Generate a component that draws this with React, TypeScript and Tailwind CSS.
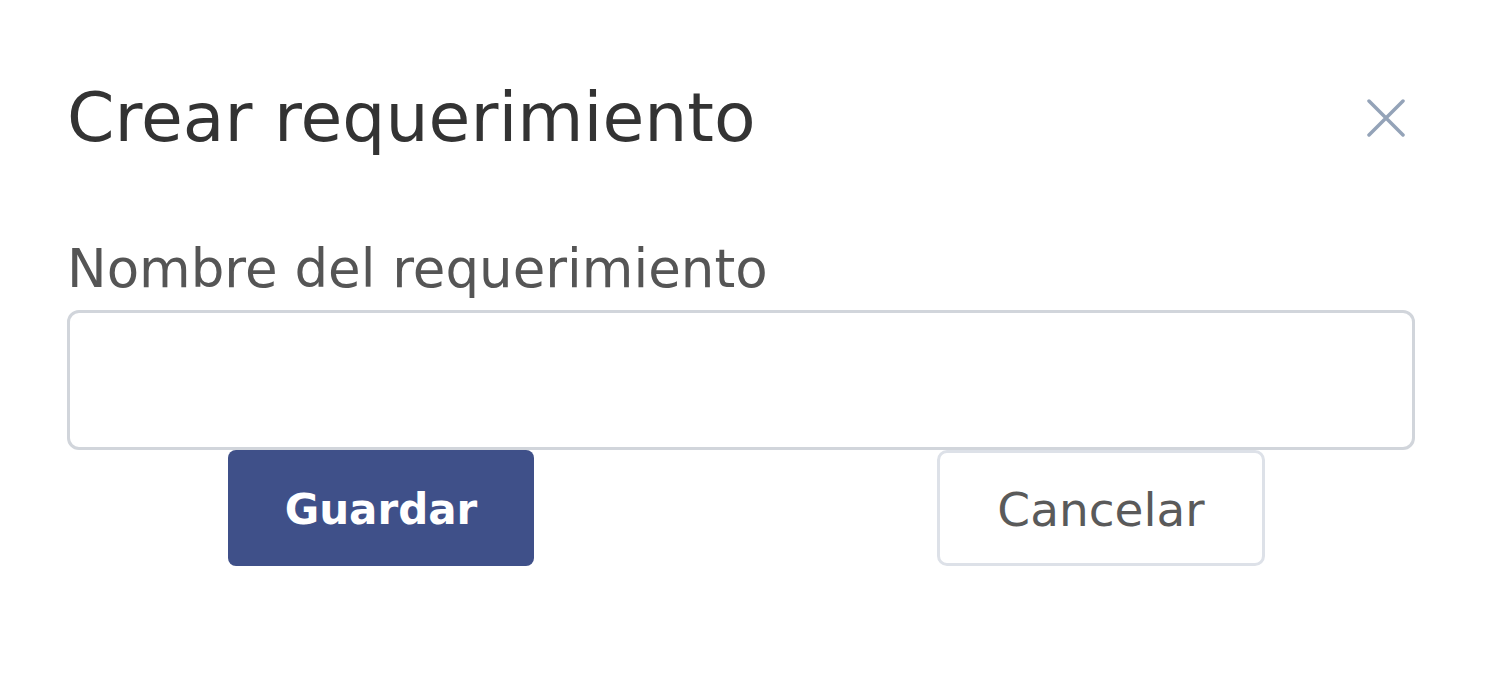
export default function App() {
  return (
    <div className="min-h-screen w-full bg-white" style={{ fontFamily: '"DejaVu Sans", "Noto Sans", sans-serif' }}>
      <div className="pl-[67px] pr-[73px] pt-[76px]">
        {/* Header */}
        <div className="flex items-center justify-between">
          <h2 className="text-[68px] font-normal leading-[84px] text-[#333333]">Crear requerimiento</h2>
          <button className="mr-[10px] text-[#94a3b8]" aria-label="Cerrar">
            <svg width="38" height="38" viewBox="0 0 38 38" fill="none" stroke="currentColor" strokeWidth="3.5" strokeLinecap="round">
              <path d="M2 2 L36 36 M36 2 L2 36" />
            </svg>
          </button>
        </div>

        {/* Form */}
        <div className="mt-[78px]">
          <label className="block text-[53px] font-medium leading-[62px] text-[#555555]">Nombre del requerimiento</label>
          <input
            type="text"
            className="mt-[10px] block h-[140px] w-full rounded-[12px] border-[3px] border-[#d1d5db] bg-white px-4 outline-none"
          />
          <div className="grid grid-cols-2 justify-items-center gap-x-[92px]">
            <button className="h-[116px] w-[306px] rounded-[8px] bg-[#3f5089] pt-[2px] text-[42px] font-semibold text-white">
              Guardar
            </button>
            <button className="h-[116px] w-[328px] rounded-[10px] border-[3px] border-[#dde1e8] bg-white pt-[4px] text-[47px] font-medium text-[#5a5a5a]">
              Cancelar
            </button>
          </div>
        </div>
      </div>
    </div>
  );
}
